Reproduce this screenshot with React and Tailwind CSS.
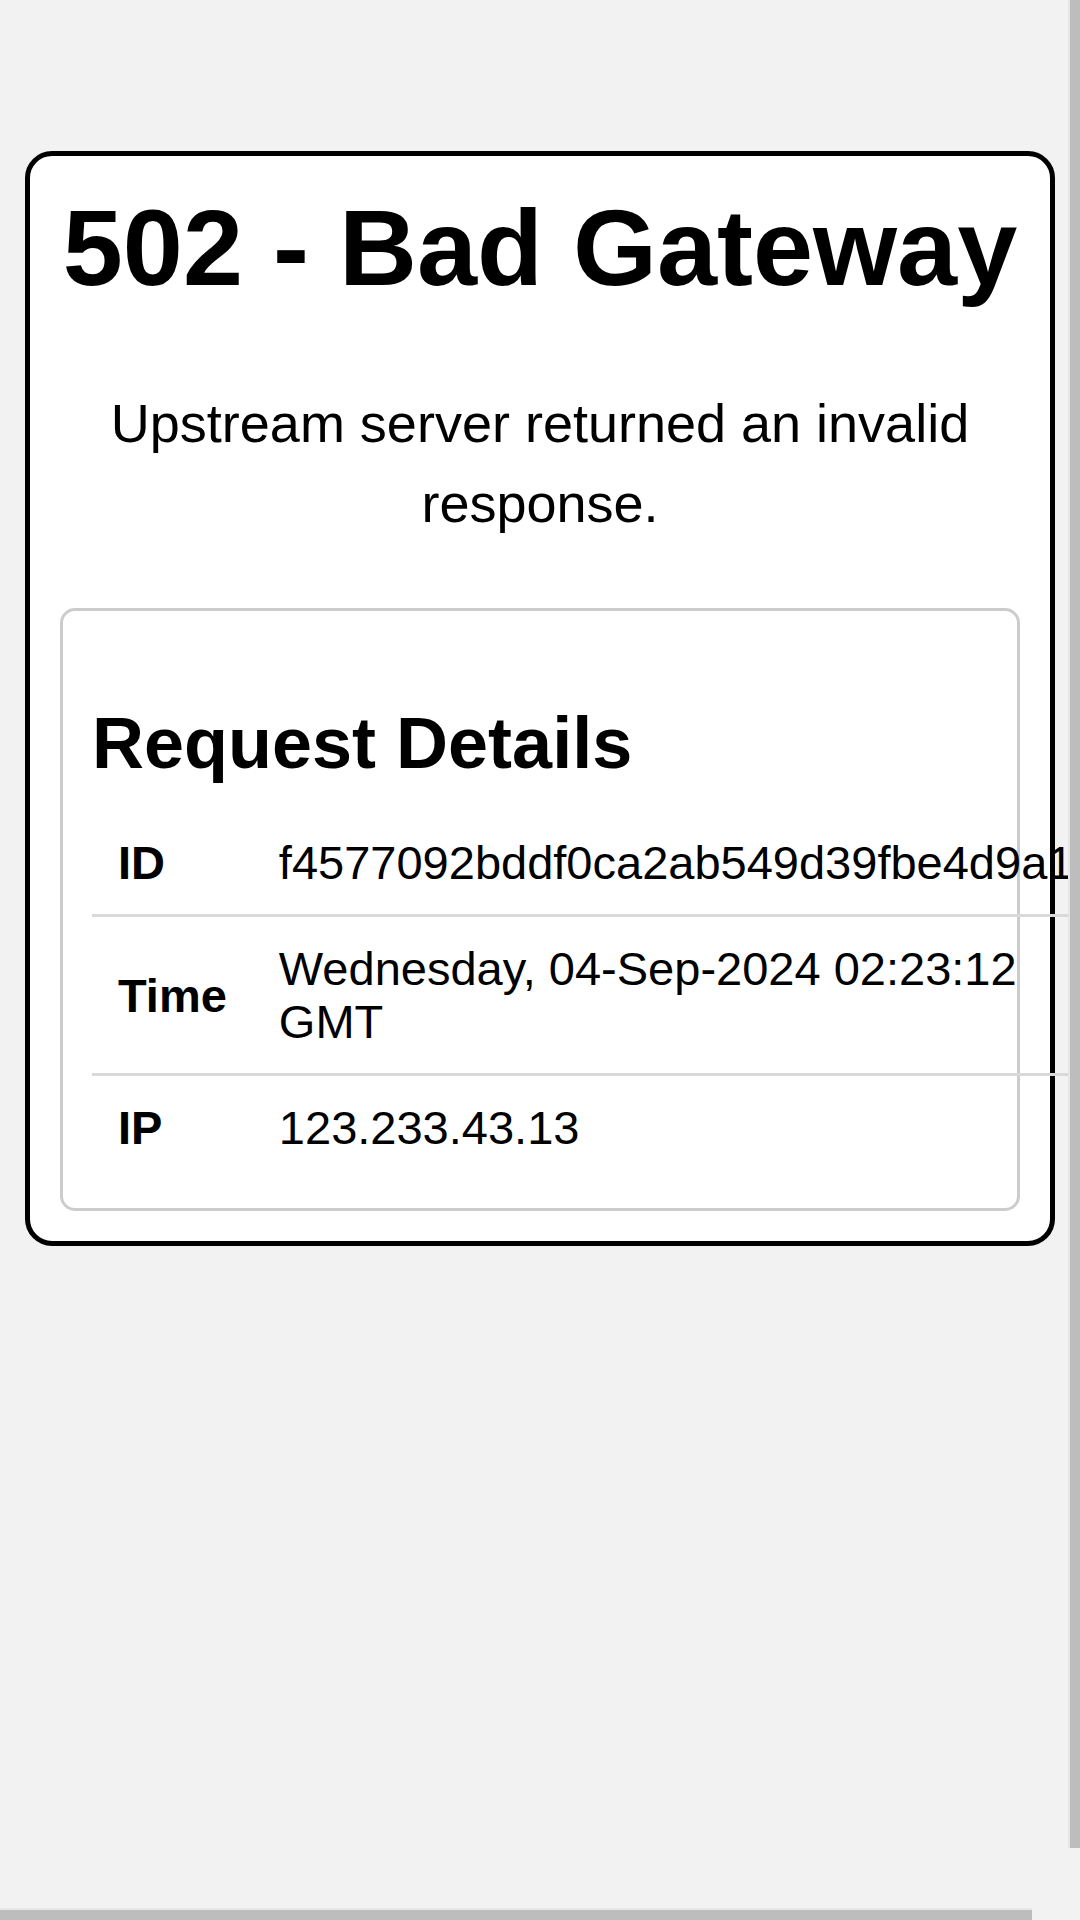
import React from "react";

const rows = [
  { label: "ID", value: "f4577092bddf0ca2ab549d39fbe4d9a1" },
  { label: "Time", value: "Wednesday, 04-Sep-2024 02:23:12 GMT" },
  { label: "IP", value: "123.233.43.13" },
];

export default function App() {
  return (
    <div className="min-h-[1970px] bg-[#f2f2f2] pl-[25px] pt-[151px] font-['Liberation_Sans',Arial,sans-serif] text-black">
      <div className="w-[1030px] rounded-[27px] border-[5px] border-black bg-white p-[30px] text-center">
        <h1 className="text-[108px] font-bold leading-[124px]">502 - Bad Gateway</h1>
        <p className="mb-[65px] mt-[73px] text-[54px] leading-[80px]">
          Upstream server returned an invalid response.
        </p>

        {/* request details box */}
        <div className="rounded-[15px] border-[3px] border-[#cccccc] p-[29px] text-left">
          <h2 className="mt-[62px] text-[72px] font-bold leading-[82px]">Request Details</h2>
          <table className="mt-[27px] w-full text-[47px] leading-[53px]">
            <tbody>
              {rows.map((row, i) => (
                <tr key={row.label} className={i < rows.length - 1 ? "border-b-[3px] border-[#d9d9d9]" : ""}>
                  <td className="px-[26px] py-[25px] font-bold">{row.label}</td>
                  <td className="px-[26px] py-[25px]">{row.value}</td>
                </tr>
              ))}
            </tbody>
          </table>
        </div>
      </div>

      <div aria-hidden className="fixed right-0 top-0 h-[1908px] w-[12px] bg-[#f2f2f2]">
        <div className="h-[1848px] w-full border-l-2 border-[#e6e6e6] bg-[#bdbdbd]" />
      </div>
      <div aria-hidden className="fixed bottom-0 left-0 h-[12px] w-full bg-[#f2f2f2]">
        <div className="h-full w-[1032px] border-t-2 border-[#e6e6e6] bg-[#bdbdbd]" />
      </div>
    </div>
  );
}
